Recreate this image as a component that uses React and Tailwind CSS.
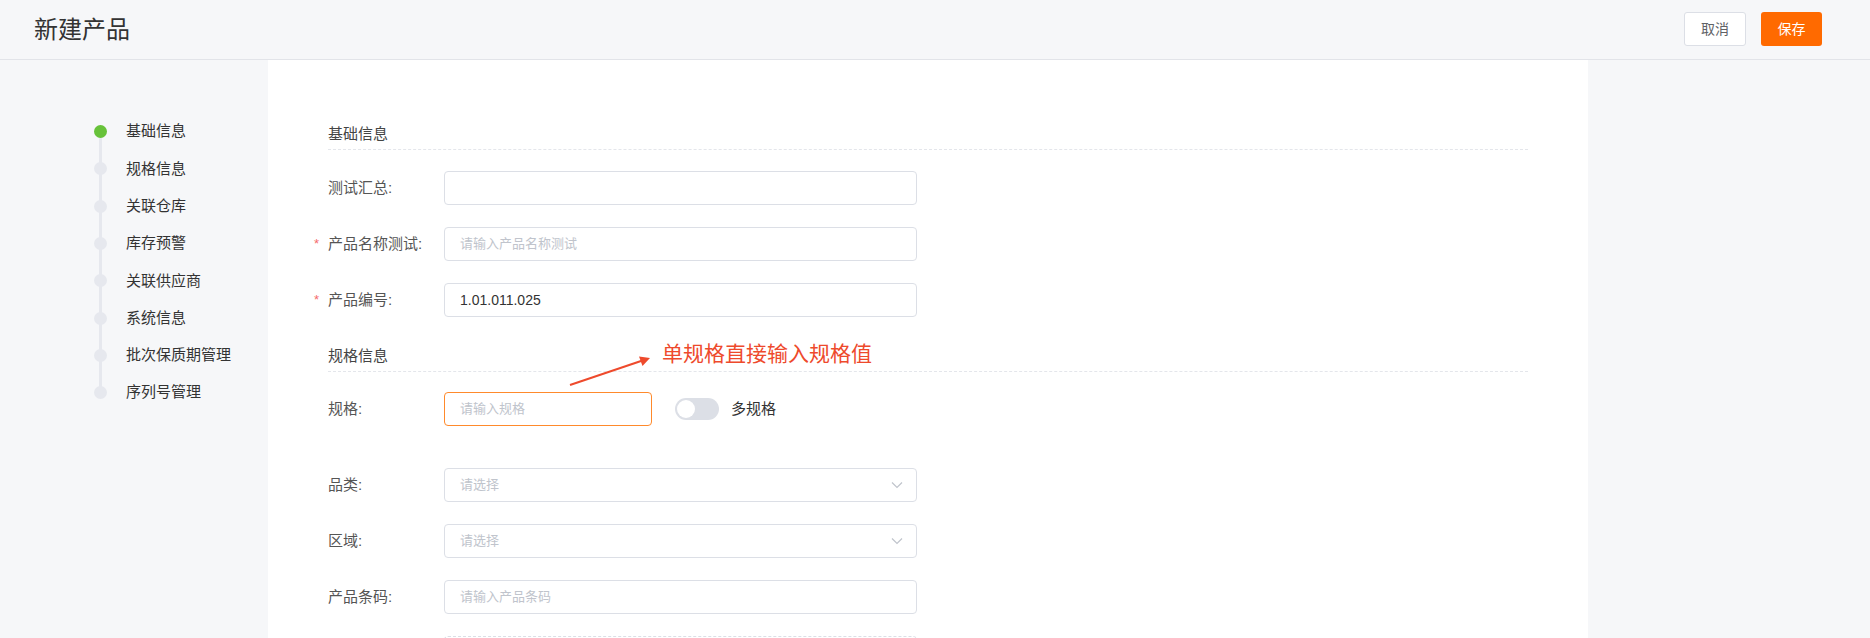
const steps = ['基础信息', '规格信息', '关联仓库', '库存预警', '关联供应商', '系统信息', '批次保质期管理', '序列号管理']

const font = { fontFamily: '"Liberation Sans", "Noto Sans CJK SC", sans-serif' }

function Chevron() {
  return (
    <svg width="12" height="8" viewBox="0 0 12 8" fill="none" className="absolute right-[13px] top-1/2 -translate-y-1/2">
      <path d="M1 1.5 L6 6.5 L11 1.5" stroke="#c0c4cc" strokeWidth="1.2" />
    </svg>
  )
}

function Field({ label, required, children }) {
  return (
    <div className="flex h-[34px] items-center">
      <div className="relative w-[116px] text-[15px] text-[#555]">
        {required && <span className="absolute -left-[14px] top-[1px] text-[13px] text-[#f56c6c]">*</span>}
        {label}:
      </div>
      {children}
    </div>
  )
}

function Input({ placeholder, value, className = 'w-[473px] border-[#dcdfe6]', select }) {
  return (
    <div className={`relative flex h-[34px] items-center rounded border bg-white pl-[15px] text-[13px] ${className}`}>
      {value ? <span className="text-[14px] text-[#333]">{value}</span> : <span className="text-[#c0c4cc]">{placeholder}</span>}
      {select && <Chevron />}
    </div>
  )
}

function SectionTitle({ children, className = '' }) {
  return (
    <div className={`border-b border-dashed border-[#e4e6eb] pb-[5px] text-[15px] leading-[20px] text-[#444] ${className}`}>
      {children}
    </div>
  )
}

export default function App() {
  return (
    <div className="min-h-[638px] w-[1870px] bg-[#f6f7f9]" style={font}>
      <header className="flex h-[60px] items-center justify-between border-b border-[#e2e4e9] bg-[#f6f7f9] pl-[34px] pr-[48px]">
        <h1 className="text-[24px] leading-none text-[#333]">新建产品</h1>
        <div className="-mt-[2px] flex gap-[15px]">
          <button className="h-[34px] w-[62px] rounded-[3px] border border-[#dcdfe6] bg-white text-sm text-[#606266]">取消</button>
          <button className="h-[34px] w-[61px] rounded-[3px] bg-[#ff6a00] text-sm text-white">保存</button>
        </div>
      </header>

      <div className="flex">
        <aside className="w-[268px] pt-[53px]">
          <div className="relative">
            <div className="absolute left-[99px] top-[18px] h-[260px] w-[3px] bg-[#e6e8ee]" />
            {steps.map((s, i) => (
              <div key={s} className="relative flex h-[37.3px] items-center">
                <div className={`ml-[94px] h-[13px] w-[13px] rounded-full ${i === 0 ? 'bg-[#67c23a]' : 'bg-[#e6e8ee]'}`} />
                <span className="ml-[19px] text-[15px] text-[#333]">{s}</span>
              </div>
            ))}
          </div>
        </aside>

        <main className="h-[578px] w-[1320px] overflow-hidden bg-white px-[60px] pt-[64px]">
          <SectionTitle>基础信息</SectionTitle>
          <div className="mt-[21px] flex flex-col gap-[22px]">
            <Field label="测试汇总">
              <Input />
            </Field>
            <Field label="产品名称测试" required>
              <Input placeholder="请输入产品名称测试" />
            </Field>
            <Field label="产品编号" required>
              <Input value="1.01.011.025" />
            </Field>
          </div>

          <div className="relative">
            <SectionTitle className="mt-[29px]">规格信息</SectionTitle>
            <span className="absolute left-[334px] -top-[3px] text-[21px] leading-none text-[#ee4a2c]">单规格直接输入规格值</span>
            <svg className="absolute left-[240px] top-[2px]" width="90" height="40" viewBox="0 0 90 40">
              <line x1="2" y1="37" x2="76" y2="12" stroke="#ee4a2c" strokeWidth="2" />
              <path d="M82 10 L71 8.5 L74.5 18 Z" fill="#ee4a2c" />
            </svg>
          </div>

          <div className="mt-[20px]">
            <Field label="规格">
              <Input placeholder="请输入规格" className="w-[208px] border-[#ff8a2c]" />
              <div className="ml-[23px] flex h-[22px] w-[44px] items-center rounded-full bg-[#dcdfe6] px-[2px]">
                <div className="h-[18px] w-[18px] rounded-full bg-white" />
              </div>
              <span className="ml-[12px] text-[15px] text-[#333]">多规格</span>
            </Field>
          </div>

          <div className="mt-[42px] flex flex-col gap-[22px]">
            <Field label="品类">
              <Input placeholder="请选择" select />
            </Field>
            <Field label="区域">
              <Input placeholder="请选择" select />
            </Field>
            <Field label="产品条码">
              <Input placeholder="请输入产品条码" />
            </Field>
            <div className="ml-[116px] h-[34px] w-[473px] rounded border border-dashed border-[#dcdfe6]" />
          </div>
        </main>
      </div>
    </div>
  )
}
